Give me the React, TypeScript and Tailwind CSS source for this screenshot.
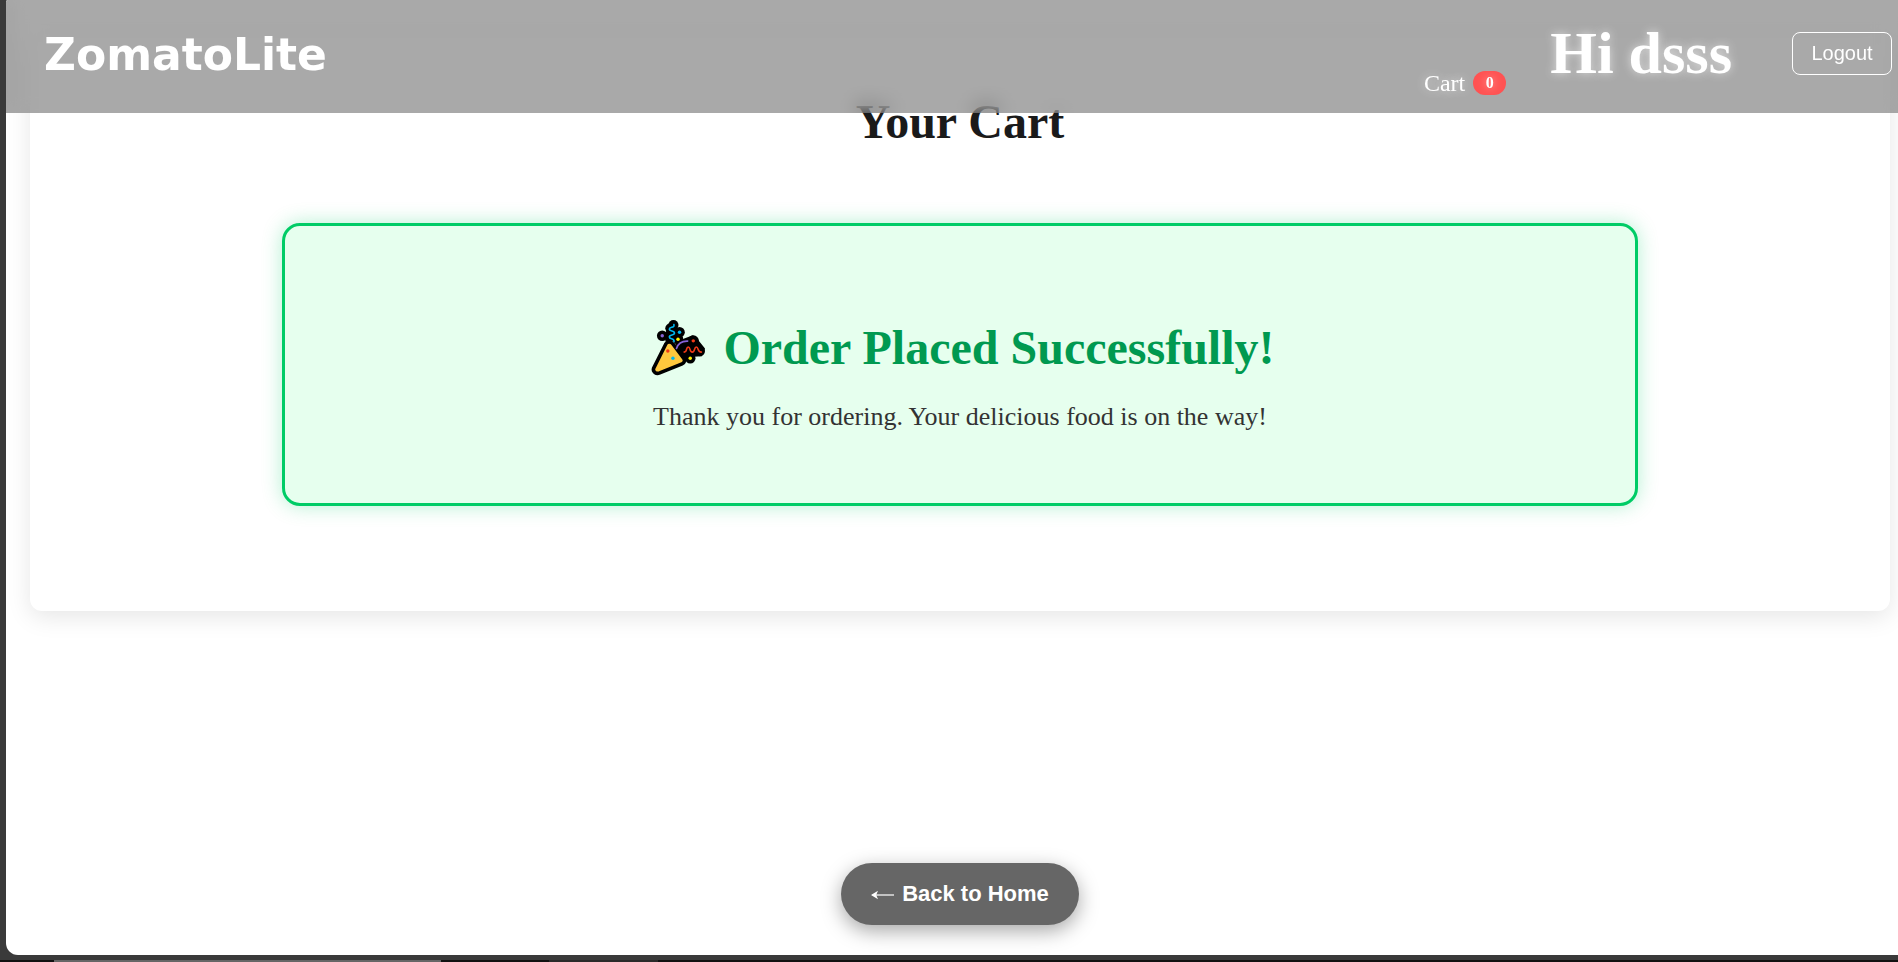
const serif = "font-['Liberation_Serif','Times_New_Roman',serif]";
const sans = "font-['Liberation_Sans',Arial,sans-serif]";

function PartyPopper() {
  return (
    <svg viewBox="4 5 55 55" className="size-14 shrink-0" aria-hidden="true">
      <g fill="#000">
        <circle cx="17" cy="20.500" r="5.200" />
        <circle cx="28" cy="10" r="5" />
        <circle cx="24.500" cy="13" r="4.500" />
        <circle cx="34" cy="17" r="5.200" />
        <circle cx="32.500" cy="24" r="5.200" />
        <circle cx="47.500" cy="25.500" r="5.500" />
        <circle cx="54" cy="35.500" r="5" />
        <circle cx="44.500" cy="42.500" r="5.200" />
        <path d="M21 13h9l5 4v9H20z" />
        <path d="M30 29 38 23.500l9-3.500 5.500 5 6.500 8-3 7.500-8.500.500-8 4z" />
      </g>
      <path
        d="M20.500 28.500C22 26 25.500 26 27.500 28.500L38 42.500C39.500 45 39 47 36.500 48L14.500 57C11 58.300 7.500 56 8.500 52.500z"
        fill="#ffc83d"
        stroke="#000"
        strokeWidth="3.500"
        strokeLinejoin="round"
      />
      <g fill="none" strokeWidth="1.600" strokeLinecap="round">
        <path d="M28.500 9.500c.8 3.800-4.500 1.500-4.500 4.300s5 1.200 5 4-5 1-5 3.800 5 .8 4.600 4.600" stroke="#00b7f0" />
        <path d="M31 33c1.500-5 5.500-7.500 11-7.300" stroke="#8764d8" />
        <path d="M38.500 36.500c3.500 0 1.500-5 4-5s1 5 4 5 1.500-5 4-5 .5 5 5 5" stroke="#f03a17" />
      </g>
      <circle cx="17" cy="20.500" r="1.700" fill="#8764d8" />
      <circle cx="34" cy="17" r="1.700" fill="#00b7f0" />
      <circle cx="32.500" cy="24" r="1.700" fill="#fff100" />
      <circle cx="47.500" cy="25.500" r="1.700" fill="#f03a17" />
      <circle cx="44.500" cy="42.500" r="1.700" fill="#fff100" />
      <circle cx="22.500" cy="35.500" r="1.700" fill="#f03a17" />
      <circle cx="27.500" cy="42.500" r="1.700" fill="#00b7f0" />
    </svg>
  );
}

function ArrowLeft() {
  return (
    <svg viewBox="0 0 23 10" className="mt-1 h-2.5 w-[23px] shrink-0" aria-hidden="true">
      <path d="M1.500 5H23" stroke="#fff" strokeWidth="1.200" />
      <path d="M0 5 7 .8 5.200 5 7 9.200z" fill="#fff" />
    </svg>
  );
}

function Header() {
  return (
    <header className="sticky top-0 z-10 flex h-[113px] shrink-0 items-start justify-between bg-[#545454]/50 pr-1.5 pl-[38px] text-white backdrop-blur-[10px]">
      <a href="#home" className="mt-7 font-['DejaVu_Sans',Verdana,sans-serif] text-[44px] leading-[54px] font-bold">
        ZomatoLite
      </a>
      <nav className="flex items-start">
        <a href="#cart" className="mt-[69px] mr-11 flex items-center gap-2 text-2xl leading-7 [text-shadow:0_0_10px_rgba(255,255,255,0.6)]">
          Cart
          <span className="flex h-6 w-[33px] items-center justify-center rounded-full bg-[#ff5252] text-[16px] font-bold">
            0
          </span>
        </a>
        <span className="mt-[19px] mr-[60px] text-[60px] leading-[68px] font-bold [text-shadow:0_0_10px_rgba(255,255,255,0.6)]">
          Hi dsss
        </span>
        <button type="button" className={`mt-8 h-[43px] w-[100px] rounded-lg border border-white pb-0.5 text-xl ${sans}`}>
          Logout
        </button>
      </nav>
    </header>
  );
}

export default function App() {
  return (
    <div className={`flex min-h-screen flex-col bg-[#3a3a3a] ${serif}`}>
      <div className="ml-1.5 flex flex-1 flex-col overflow-clip rounded-tl-[2px] rounded-bl-xl bg-white">
        <Header />
        <main className="-mt-[77px] flex flex-1 flex-col pr-2 pl-6">
          <section className="rounded-xl bg-white px-6 pt-[59px] pb-[105px] text-center shadow-[0_6px_25px_rgba(0,0,0,0.1)]">
            <h1 className="text-[48px] leading-[54px] font-bold text-[#1a1a1a]">Your Cart</h1>
            <div className="mx-auto mt-[74px] flex h-[283px] max-w-[1356px] flex-col items-center rounded-[18px] border-[3px] border-[#00cc66] bg-[#e6ffee] pt-[92px] shadow-[0_0_20px_rgba(0,204,102,0.3)]">
              <h2 className="flex items-center gap-[18px] pl-1 text-[48px] leading-[60px] font-bold text-[#009950]">
                <PartyPopper />
                Order Placed Successfully!
              </h2>
              <p className="mt-6 text-[26px] leading-[30px] text-[#333]">
                Thank you for ordering. Your delicious food is on the way!
              </p>
            </div>
          </section>
          <div className="mt-auto flex justify-center pb-[30px]">
            <button
              type="button"
              className={`flex h-[62px] w-[238px] items-center justify-center gap-2 rounded-full bg-[#666] pb-0.5 text-[22px] font-bold text-white shadow-[0_6px_20px_rgba(0,0,0,0.35)] ${sans}`}
            >
              <ArrowLeft />
              Back to Home
            </button>
          </div>
        </main>
      </div>
      <div className="h-[5px]" />
      <div className="flex h-0.5 bg-[#111]">
        <div className="ml-[54px] w-[387px] bg-[#666]" />
        <div className="ml-[108px] w-[109px] bg-[#2a2a2a]" />
      </div>
    </div>
  );
}
